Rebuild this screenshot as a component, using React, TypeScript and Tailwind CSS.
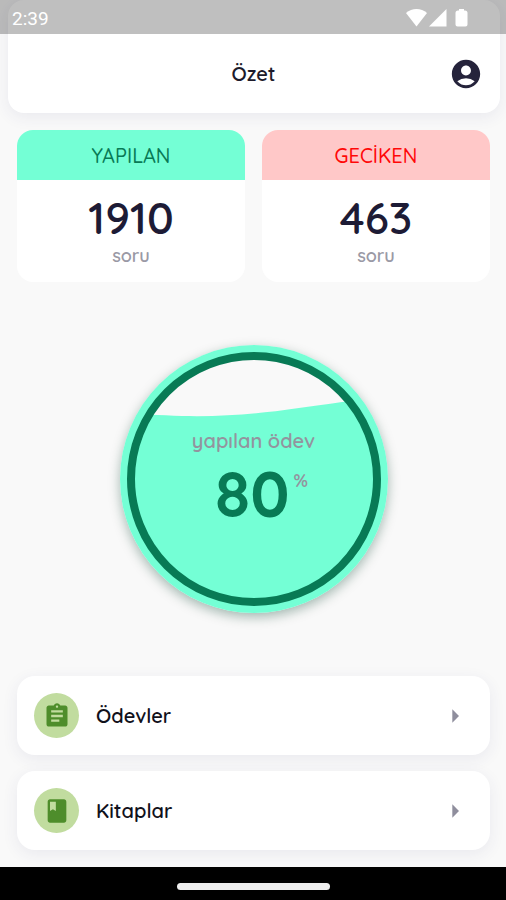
import React from "react";
import type { IconType } from "react-icons";
import { MdAccountCircle, MdArrowRight, MdAssignment, MdBook } from "react-icons/md";

type Stat = {
  label: string;
  value: number;
  headClass: string;
};

type MenuItem = {
  label: string;
  icon: IconType;
};

const stats: Stat[] = [
  { label: "YAPILAN", value: 1910, headClass: "bg-[#74ffd5] text-[#087a55]" },
  { label: "GECİKEN", value: 463, headClass: "bg-[#ffc8c8] text-[#ff0808]" },
];

const menu: MenuItem[] = [
  { label: "Ödevler", icon: MdAssignment },
  { label: "Kitaplar", icon: MdBook },
];

const StatusBar = () => (
  <div className="relative z-10 flex h-[34px] items-center justify-between bg-black/25 pt-1 pl-3 pr-[38px] font-[Roboto,sans-serif] text-[19px] text-white">
    <span>2:39</span>
    <svg width="62" height="20" viewBox="0 0 62 20" fill="currentColor">
      <path d="M0 4C6 -1.300 15 -1.300 21 4L10.500 17.500z" />
      <path d="M40.500 0v17.500H23z" />
      <path d="M53 0h5v1.500h1a2.500 2.500 0 0 1 2.500 2.500v11.500a2 2 0 0 1-2 2h-8a2 2 0 0 1-2-2V4A2.500 2.500 0 0 1 52 1.500h1z" />
    </svg>
  </div>
);

const StatCard = ({ label, value, headClass }: Stat) => (
  <div className="flex-1 overflow-hidden rounded-2xl bg-white text-center">
    <h2 className={`flex h-[50px] items-center justify-center pt-px text-xl font-medium ${headClass}`}>
      {label}
    </h2>
    <div className="flex h-[102px] flex-col items-center pt-4">
      <p className="text-[44px] leading-[44px] font-semibold text-[#1d1b35]">{value}</p>
      <p className="mt-1 text-lg leading-6 font-semibold text-[#9a99a5]">soru</p>
    </div>
  </div>
);

const Progress = ({ percent }: { percent: number }) => (
  <div className="grid size-[268px] place-items-center rounded-full shadow-[0_4px_12px_rgba(0,60,40,0.35)]">
    <svg className="size-full [grid-area:1/1]" viewBox="0 0 268 268">
      <clipPath id="tank">
        <circle cx="134" cy="134" r="123" />
      </clipPath>
      <circle cx="134" cy="134" r="134" fill="#74ffd5" />
      <circle cx="134" cy="134" r="123" fill="#f9f9f9" />
      {/* water level */}
      <path
        d="M0 67C100 77 150 67 222 57L268 52V268H0z"
        fill="#74ffd5"
        clipPath="url(#tank)"
      />
      <circle cx="134" cy="134" r="123" fill="none" stroke="#087a55" strokeWidth="8" />
    </svg>
    <div className="flex flex-col items-center pb-1 [grid-area:1/1]">
      <p className="text-xl leading-6 font-semibold text-[#93949e]">yapılan ödev</p>
      <p className="mt-2 ml-4 flex text-[#087a55]">
        <span className="text-[64px] leading-[64px] font-bold">{percent}</span>
        <span className="pt-2 pl-1 text-lg leading-6 font-semibold text-[#93949e]">%</span>
      </p>
    </div>
  </div>
);

const MenuRow = ({ label, icon: Icon }: MenuItem) => (
  <button
    type="button"
    className="flex h-[79px] w-full cursor-pointer items-center rounded-[18px] bg-white pl-[17px] pr-[19px] shadow-[0_4px_16px_rgba(50,50,110,0.08)]"
  >
    <span className="flex size-[45px] items-center justify-center rounded-full bg-[#c1dc9f] text-[#4e8d2b]">
      <Icon size={28} />
    </span>
    <span className="ml-[17px] text-xl font-semibold text-[#11111b]">{label}</span>
    <MdArrowRight size={32} className="ml-auto text-[#8f8e9d]" />
  </button>
);

const App = () => {
  return (
    <div className="flex min-h-screen flex-col bg-[#f9f9f9] font-[Quicksand,Lato,sans-serif]">
      <StatusBar />

      <header className="-mt-[34px] ml-2 mr-[6px] grid grid-cols-[1fr_auto_1fr] items-center rounded-2xl bg-white pr-[17px] pl-4 pt-[34px] shadow-[0_4px_16px_rgba(50,50,110,0.08)]">
        <h1 className="col-start-2 py-6 text-xl leading-[31px] font-semibold text-[#1d1b2b]">Özet</h1>
        <button type="button" aria-label="Profil" className="cursor-pointer justify-self-end text-[#25233b]">
          <MdAccountCircle size={34} />
        </button>
      </header>

      <main className="flex flex-1 flex-col items-center pr-4 pl-[17px] pt-[17px] pb-[17px]">
        <section className="flex w-full gap-[17px]">
          {stats.map((stat) => (
            <StatCard key={stat.label} {...stat} />
          ))}
        </section>

        <section className="flex flex-1 items-center py-8">
          <Progress percent={80} />
        </section>

        <nav className="flex w-full flex-col gap-4">
          {menu.map((item) => (
            <MenuRow key={item.label} {...item} />
          ))}
        </nav>
      </main>

      <footer className="flex h-[33px] items-center justify-center bg-black pt-[6px]">
        <div className="h-[7px] w-[153px] rounded-full bg-[#eeeeee]" />
      </footer>
    </div>
  );
};

export default App;
